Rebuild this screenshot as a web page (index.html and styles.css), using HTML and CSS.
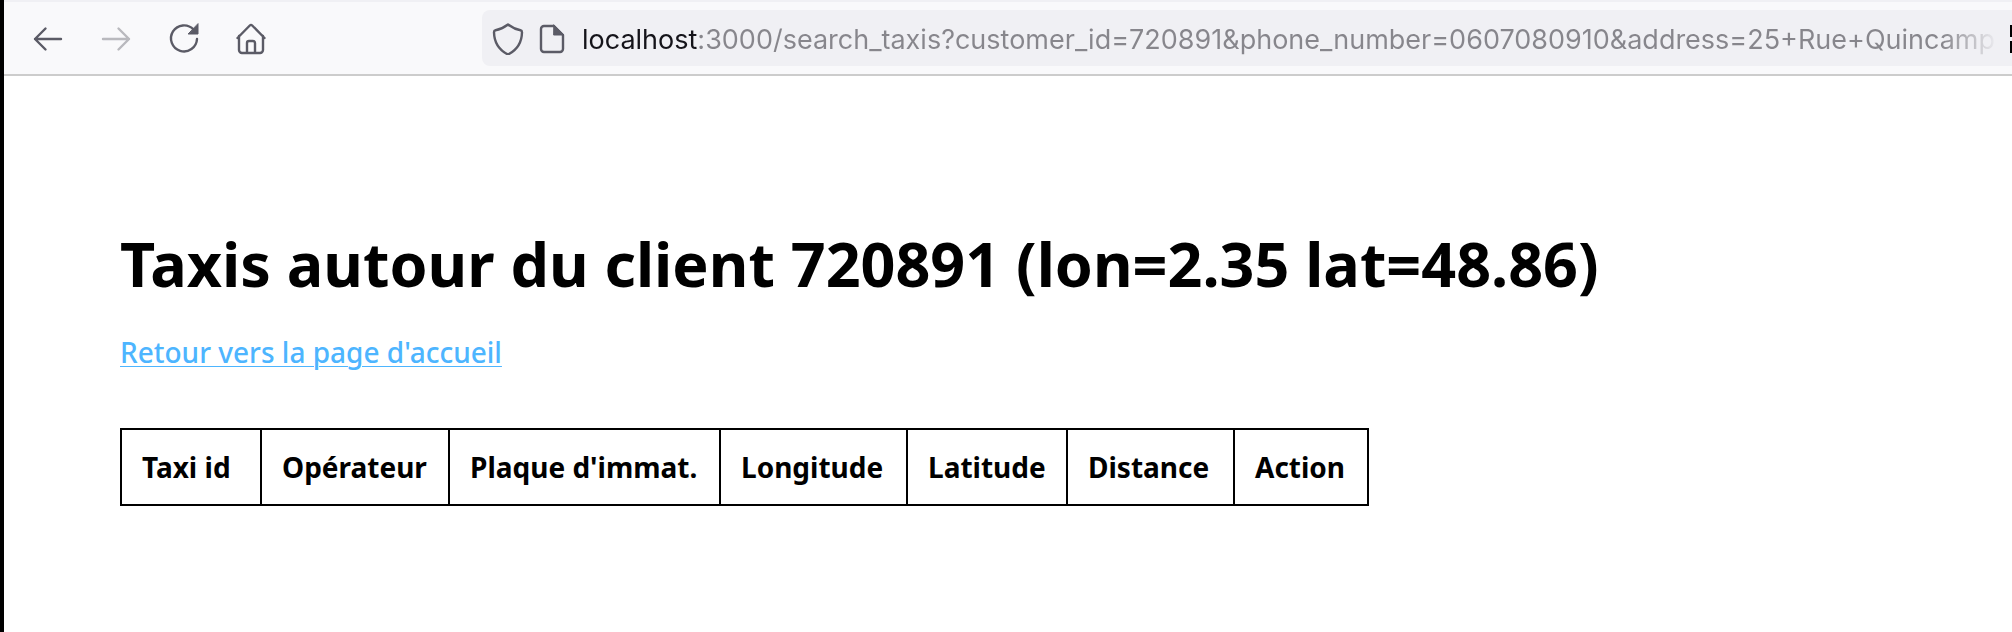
FILE: index.html
```html
<!DOCTYPE html>
<html lang="fr">
<head>
<meta charset="utf-8">
<meta name="viewport" content="width=device-width, initial-scale=1">
<title>Taxis autour du client</title>
<link rel="stylesheet" href="styles.css">
</head>
<body>
<div class="window">
  <header class="toolbar">
    <nav class="nav" aria-label="Navigation">
      <button class="nav-button" type="button" aria-label="Page précédente">
        <svg class="icon" viewBox="0 0 32 32"><path d="M29 16H3M13.500 5.500L3 16l10.500 10.500"/></svg>
      </button>
      <button class="nav-button" type="button" aria-label="Page suivante" disabled>
        <svg class="icon" viewBox="0 0 32 32"><path d="M3 16h26M18.500 5.500L29 16 18.500 26.500"/></svg>
      </button>
      <button class="nav-button" type="button" aria-label="Actualiser">
        <svg class="icon" viewBox="0 0 32 32"><path d="M25.500 6.500A13 13 0 1 0 29 16"/><path class="solid" d="M30 1v10H20.500z"/></svg>
      </button>
      <button class="nav-button" type="button" aria-label="Accueil">
        <svg class="icon" viewBox="0 0 32 32"><path d="M1.500 15L13.800 2.500a1.700 1.700 0 0 1 2.400 0L28.500 15M3 13v14a3 3 0 0 0 3 3h18a3 3 0 0 0 3-3V13M11 30V20a2 2 0 0 1 2-2h4a2 2 0 0 1 2 2v10"/></svg>
      </button>
    </nav>
    <div class="urlbar">
      <svg class="icon" viewBox="0 0 32 32" aria-hidden="true"><path d="M16 1.500c4 3 8 5 12.500 5.700 1 .2 1.500 1 1.500 2-.2 9.800-4.500 17.500-14 22.300C6.500 26.700 2.200 19 2 9.200c0-1 .5-1.800 1.500-2C8 6.500 12 4.500 16 1.500z"/></svg>
      <svg class="icon page-icon" viewBox="0 0 32 32" aria-hidden="true"><path d="M18 3H8a3 3 0 0 0-3 3v20a3 3 0 0 0 3 3h16a3 3 0 0 0 3-3V12z"/><path class="solid" d="M18 2l10 10h-10z"/></svg>
      <input class="url" type="text" aria-label="Adresse" value="localhost:3000/search_taxis?customer_id=720891&amp;phone_number=0607080910&amp;address=25+Rue+Quincamp">
      <span class="qr" aria-hidden="true"></span>
    </div>
  </header>
  <main class="page">
    <h1 class="title">Taxis autour du client 720891 (lon=2.35 lat=48.86)</h1>
    <a class="back" href="#">Retour vers la page d'accueil</a>
    <table class="taxis">
      <colgroup><col class="col-id"><col class="col-operator"><col class="col-plate"><col class="col-longitude"><col class="col-latitude"><col class="col-distance"><col class="col-action"></colgroup>
      <thead>
        <tr><th scope="col">Taxi id</th><th scope="col">Opérateur</th><th scope="col">Plaque d'immat.</th><th scope="col">Longitude</th><th scope="col">Latitude</th><th scope="col">Distance</th><th scope="col">Action</th></tr>
      </thead>
    </table>
  </main>
</div>
</body>
</html>
```
FILE: styles.css
```css
* { box-sizing: border-box; }
body {
  margin: 0;
  background: #fff;
  color: #000;
  font-family: "Noto Sans", "Open Sans", sans-serif;
  font-size: 28px;
  line-height: 36px;
}
.window { min-height: 100vh; border-left: 4px solid #000; overflow: hidden; }
.toolbar {
  display: flex;
  gap: 214px;
  height: 76px;
  padding: 8px 0 8px 28px;
  background: #f9f9fb;
  border-top: 2px solid #f0f0f4;
  border-bottom: 2px solid #ccc;
}
.nav { display: flex; align-items: center; gap: 36px; padding-top: 2px; }
.nav-button { display: flex; padding: 0; border: 0; background: none; color: #5b5b66; }
.nav-button:disabled { color: #b9b9be; }
.icon {
  flex: none;
  width: 32px;
  height: 32px;
  fill: none;
  stroke: currentColor;
  stroke-width: 2.4;
  stroke-linecap: round;
  stroke-linejoin: round;
}
.solid { fill: currentColor; stroke-width: 1; }
.urlbar {
  flex: 1;
  display: flex;
  align-items: center;
  min-width: 0;
  padding: 2px 0 0 10px;
  color: #5b5b66;
  background: #f0f0f4;
  border-radius: 8px 0 0 8px;
}
.page-icon { margin: 0 14px 0 12px; }
.url {
  flex: 1;
  min-width: 0;
  height: 40px;
  padding: 0;
  border: 0;
  outline: 0;
  background: linear-gradient(to right, #15141a 115px, #87868c 115px calc(100% - 60px), transparent calc(100% - 4px));
  background-clip: text;
  -webkit-background-clip: text;
  color: transparent;
  font: 27px Inter, sans-serif;
}
.qr {
  width: 2px;
  height: 28px;
  margin-left: 8px;
  background: linear-gradient(#000 12px, transparent 12px 16px, #000 16px);
}
.page { padding: 148px 116px 60px; }
.title { margin: 0 0 30px; font-size: 61px; line-height: 80px; font-weight: 700; }
.back {
  display: table;
  color: #4db5ff;
  font-weight: 500;
  text-decoration-thickness: 1px;
  text-underline-offset: 3px;
}
.taxis { margin-top: 58px; border-collapse: collapse; }
.taxis th { padding: 19px 20px; border: 2px solid #000; font-weight: 700; text-align: left; white-space: nowrap; }
.col-id { width: 140px; }
.col-operator { width: 188px; }
.col-plate { width: 271px; }
.col-longitude { width: 187px; }
.col-latitude { width: 160px; }
.col-distance { width: 167px; }
.col-action { width: 134px; }
```
